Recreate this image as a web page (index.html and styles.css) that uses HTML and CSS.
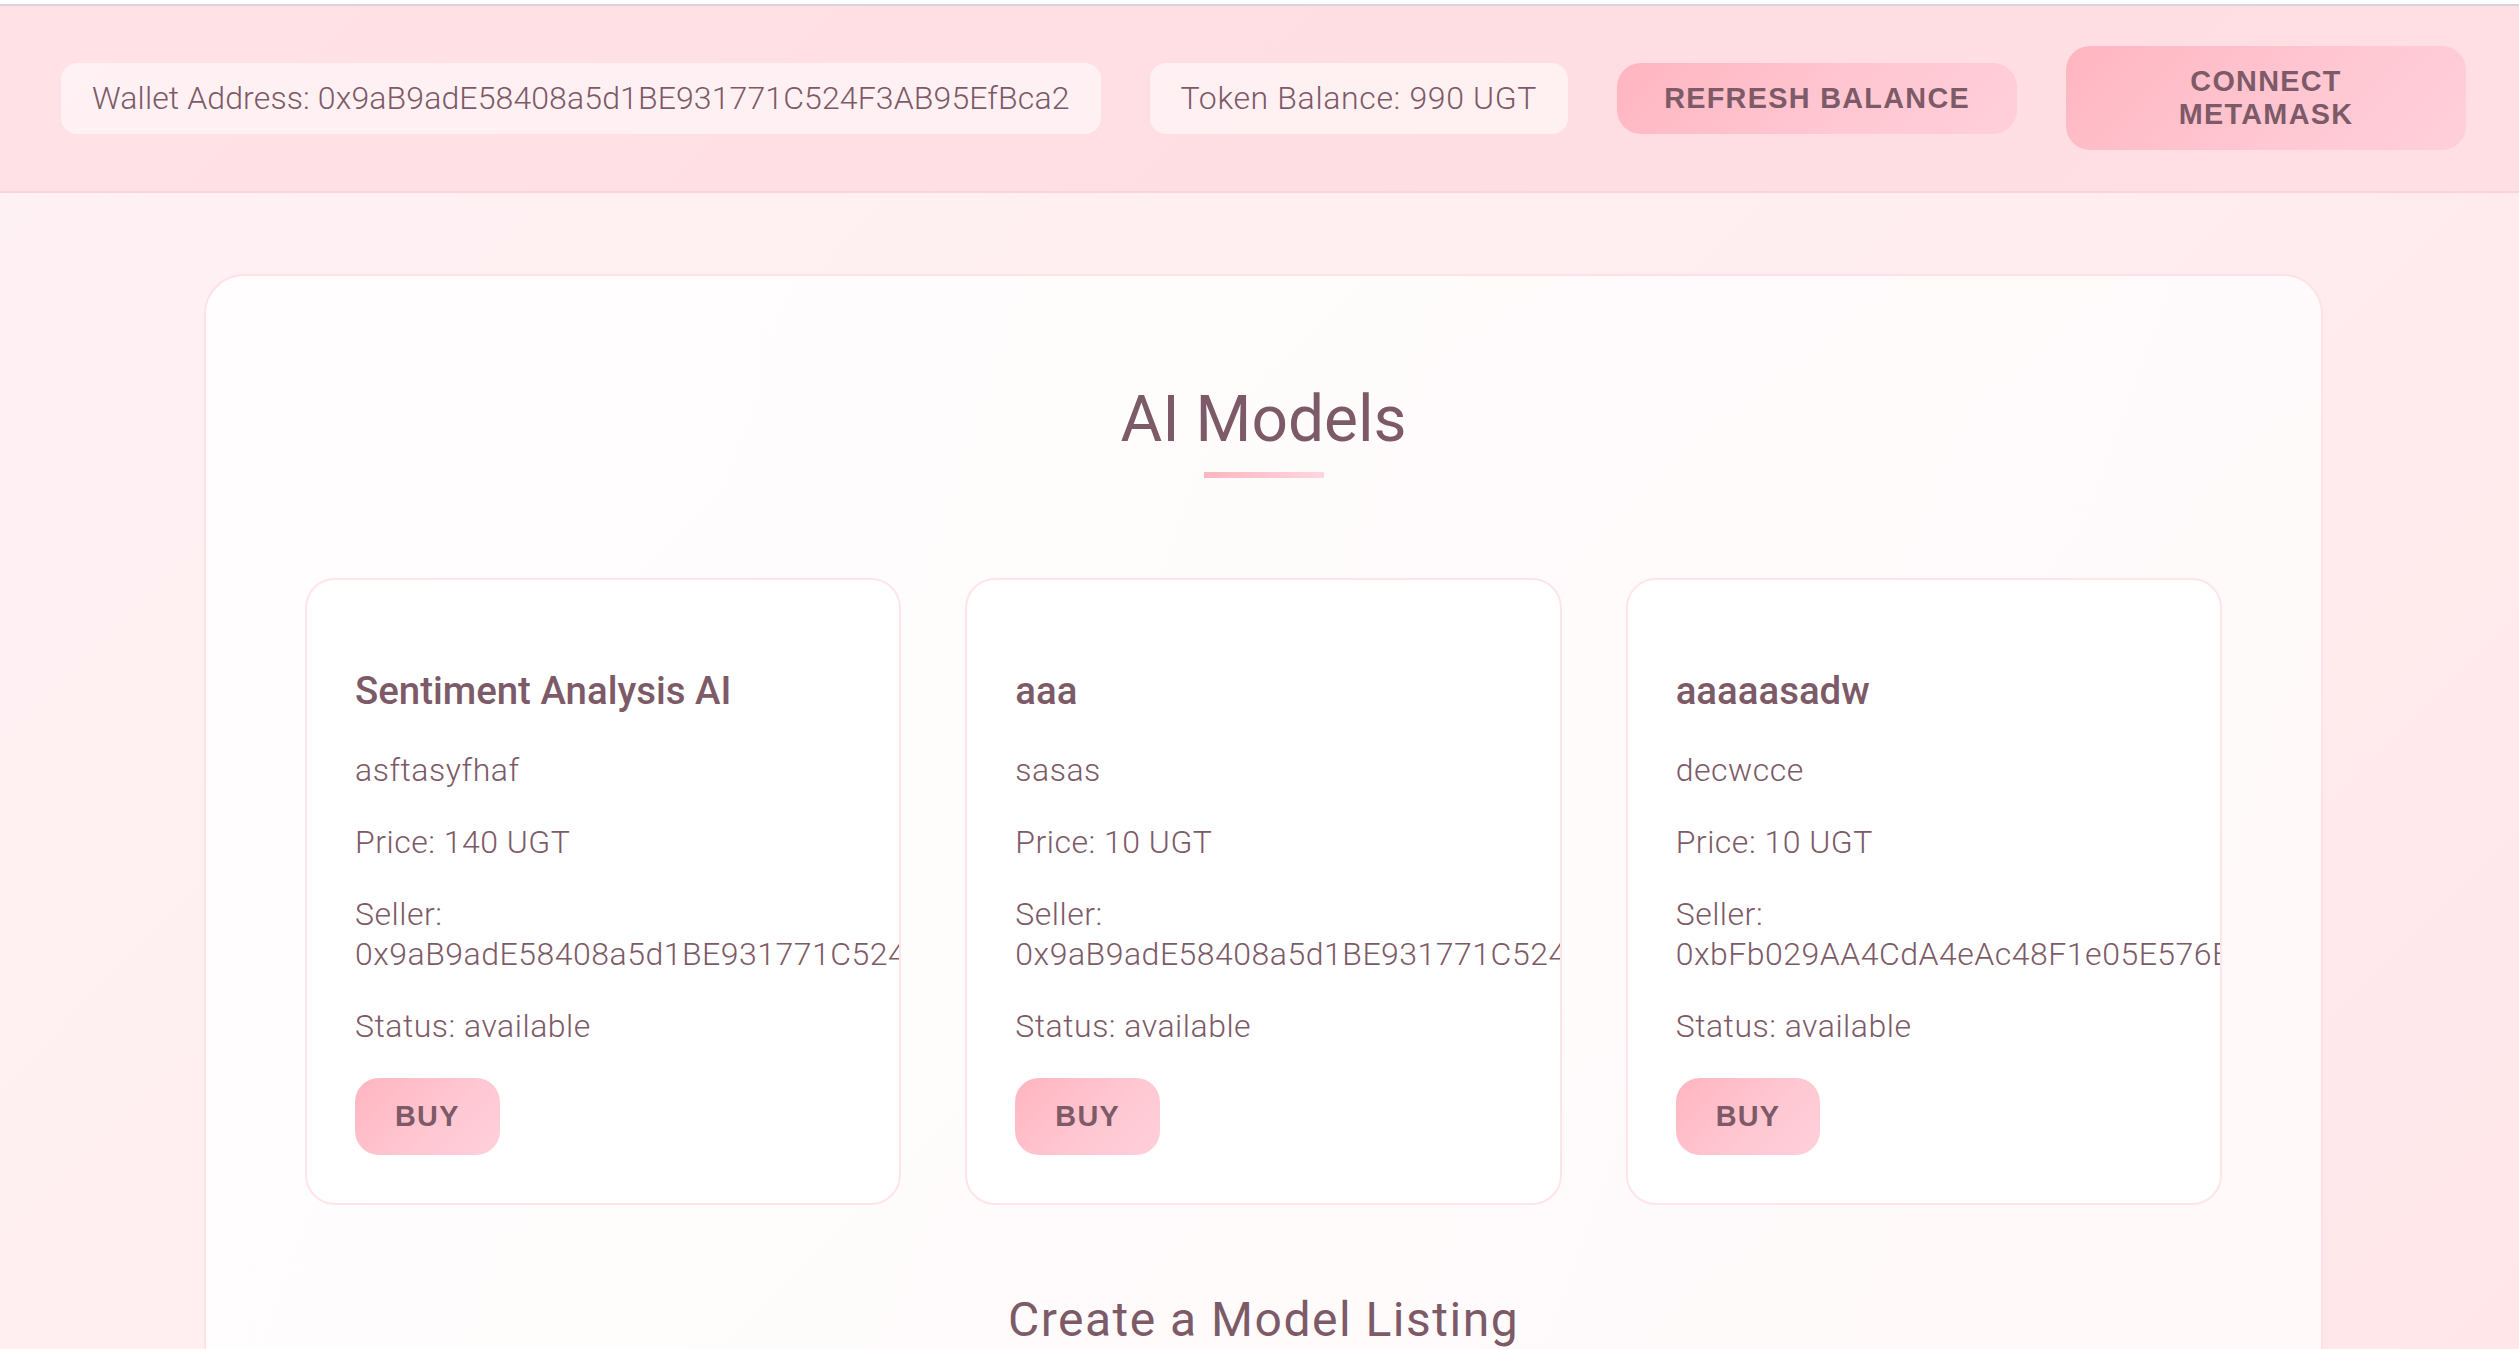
FILE: index.html
```html
<!DOCTYPE html>
<html lang="en">
<head>
<meta charset="utf-8">
<title>AI Model Marketplace</title>
<link rel="stylesheet" href="styles.css">
</head>
<body>
<div class="chrome-line"></div>
<header class="topbar">
  <div class="info-pill info-wallet">Wallet Address: 0x9aB9adE58408a5d1BE931771C524F3AB95EfBca2</div>
  <div class="info-pill info-token">Token Balance: 990 UGT</div>
  <button class="btn btn-wide">Refresh Balance</button>
  <button class="btn btn-wide">Connect MetaMask</button>
</header>
<main class="panel">
  <h2 class="section-title">AI Models</h2>
  <div class="title-bar"></div>
  <div class="model-grid">
    <article class="model-card">
      <h3>Sentiment Analysis AI</h3>
      <p>asftasyfhaf</p>
      <p>Price: 140 UGT</p>
      <p>Seller: 0x9aB9adE58408a5d1BE931771C524F3AB95EfBca2</p>
      <p>Status: available</p>
      <button class="btn btn-buy">Buy</button>
    </article>
    <article class="model-card">
      <h3>aaa</h3>
      <p>sasas</p>
      <p>Price: 10 UGT</p>
      <p>Seller: 0x9aB9adE58408a5d1BE931771C524F3AB95EfBca2</p>
      <p>Status: available</p>
      <button class="btn btn-buy">Buy</button>
    </article>
    <article class="model-card">
      <h3>aaaaasadw</h3>
      <p>decwcce</p>
      <p>Price: 10 UGT</p>
      <p>Seller: 0xbFb029AA4CdA4eAc48F1e05E576B</p>
      <p>Status: available</p>
      <button class="btn btn-buy">Buy</button>
    </article>
  </div>
  <h2 class="section-title section-sub">Create a Model Listing</h2>
</main>
</body>
</html>
```
FILE: styles.css
```css
* { box-sizing: border-box; }
html, body { margin: 0; padding: 0; }
body {
  font-family: "Roboto", "Noto Sans", sans-serif;
  font-weight: 300;
  color: #7d5a67;
  background: linear-gradient(135deg, #fff2f4 0%, #ffeef0 50%, #ffe6e9 100%);
  min-height: 100vh;
  overflow: hidden;
}
.chrome-line {
  height: 6px;
  background: #ffffff;
  border-bottom: 2px solid #d6d6da;
}
.topbar {
  display: flex;
  align-items: center;
  gap: 49px;
  padding: 40px 53px 41px 61px;
  background: linear-gradient(135deg, #ffe1e6 0%, #ffdee3 60%, #ffdfe4 100%);
  border-bottom: 2px solid #fcd4db;
}
.info-pill {
  height: 71px;
  line-height: 71px;
  padding: 0 31px;
  border-radius: 16px;
  background: rgba(255, 255, 255, 0.55);
  font-size: 32px;
  white-space: nowrap;
}
.info-wallet { letter-spacing: 0.12px; }
.info-token { letter-spacing: 0.65px; }
.btn {
  font-family: "Liberation Sans", Arial, sans-serif;
  font-weight: 700;
  font-size: 28.8px;
  letter-spacing: 1.3px;
  line-height: 33px;
  text-transform: uppercase;
  color: #7d5a67;
  border: none;
  border-radius: 24px;
  background: linear-gradient(135deg, #ffb5c0 0%, #ffc8d3 60%, #ffcfd9 100%);
  padding: 19px 40px;
  cursor: pointer;
}
.btn-wide { width: 400px; }
.btn-buy {
  display: block;
  padding: 22px 40px;
}
.panel {
  width: 2119px;
  margin: 81px 0 0 204px;
  padding: 104px 99px 120px;
  border: 2px solid #ffe1e6;
  border-radius: 40px;
  background: linear-gradient(110deg, rgba(255,255,255,0.88) 0%, rgba(255,255,255,0.8) 45%, rgba(255,255,255,0.72) 100%);
}
.section-title {
  margin: 0;
  text-align: center;
  font-size: 64px;
  font-weight: 400;
  line-height: 80px;
}
.title-bar {
  width: 120px;
  height: 6px;
  margin: 12px auto 0;
  background: linear-gradient(90deg, #ffb6c1, #ffd6df);
}
.model-grid {
  display: grid;
  grid-template-columns: repeat(3, 1fr);
  gap: 64px;
  margin-top: 100px;
}
.model-card {
  background: #ffffff;
  border: 2px solid #ffe4e8;
  border-radius: 30px;
  padding: 48px;
  overflow: hidden;
}
.model-card h3 {
  margin: 39px 0 35px;
  font-size: 38.4px;
  font-weight: 500;
  line-height: 48px;
}
.model-card p {
  margin: 32px 0;
  font-size: 32px;
  line-height: 40px;
  letter-spacing: 0.5px;
}
.section-sub {
  margin-top: 85px;
  font-size: 48px;
  line-height: 60px;
  letter-spacing: 1.5px;
}
```
